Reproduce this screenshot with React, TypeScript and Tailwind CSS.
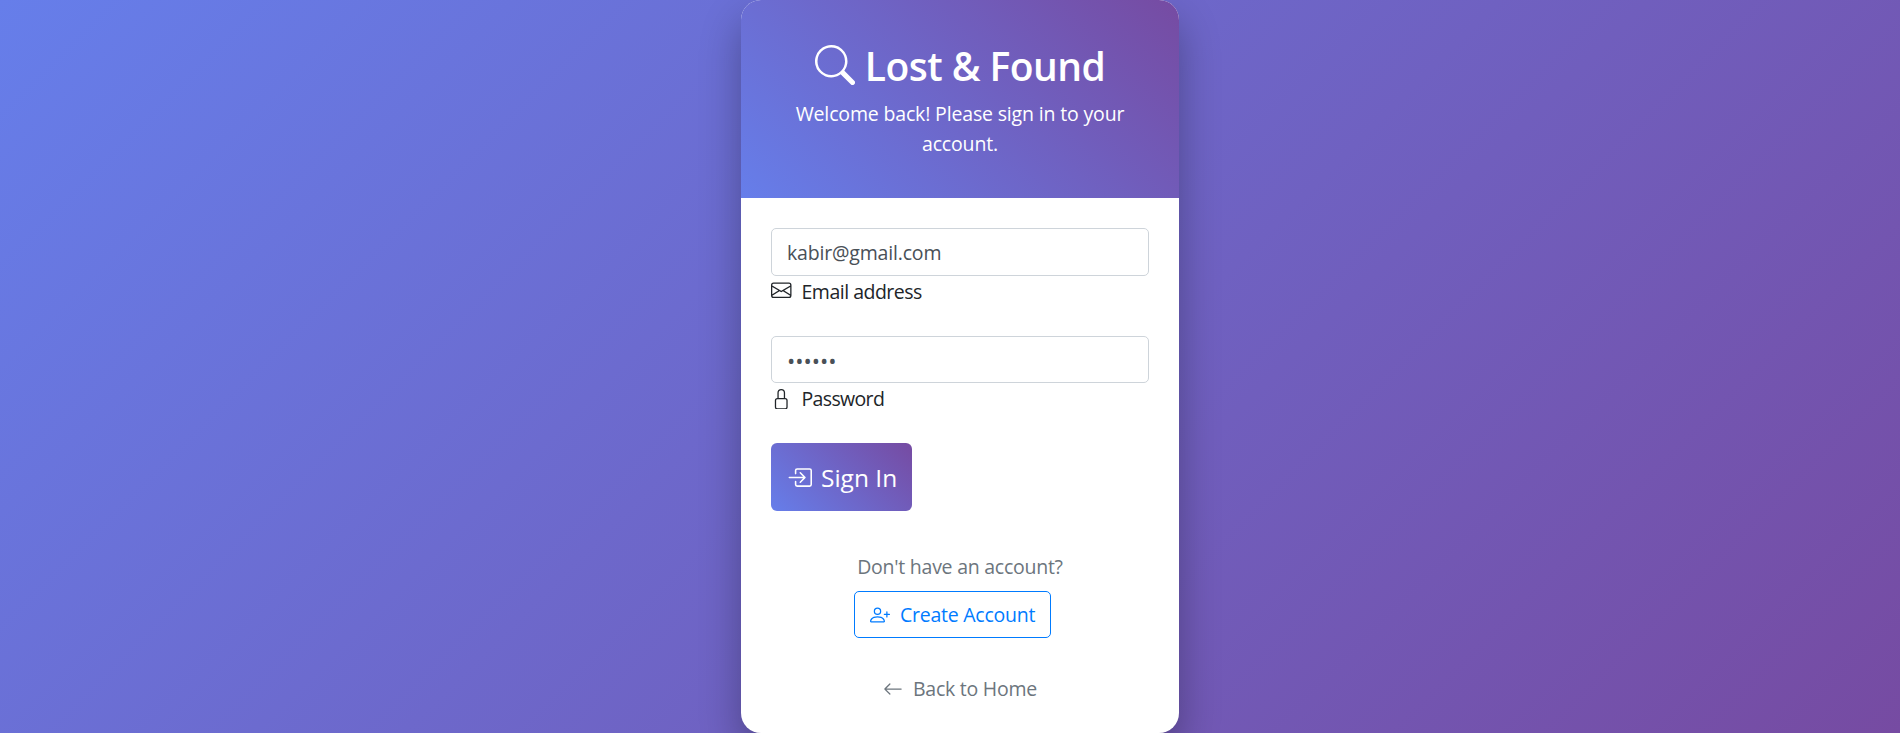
import React from "react";
import {
  BsSearch,
  BsEnvelope,
  BsLock,
  BsBoxArrowInRight,
  BsPersonPlus,
  BsArrowLeft,
} from "react-icons/bs";

type FieldProps = {
  id: string;
  type: string;
  value: string;
  label: string;
  icon: React.ReactNode;
  inputClass: string;
  labelClass: string;
};

function Field({ id, type, value, label, icon, inputClass, labelClass }: FieldProps) {
  return (
    <div className="mb-[30px]">
      <input
        id={id}
        type={type}
        defaultValue={value}
        className={`block h-[47.5px] w-full rounded-[5px] border border-[#ced4da] bg-white px-[15px] text-[#495057] outline-none ${inputClass}`}
      />
      <label htmlFor={id} className="flex h-[30px] items-center gap-[10px] text-[#212529]">
        {icon}
        <span className={`pt-0.5 ${labelClass}`}>{label}</span>
      </label>
    </div>
  );
}

export default function App() {
  return (
    <div className="flex h-[733px] justify-center overflow-hidden bg-[linear-gradient(135deg,#667eea_0%,#764ba2_100%)] pl-5 font-['Open_Sans','Noto_Sans',sans-serif] text-[19.5px] leading-[30px]">
      <main className="h-[733px] w-[438px] overflow-hidden rounded-[20px] bg-white shadow-[0_20px_40px_rgba(0,0,0,0.3)]">
        <header className="h-[198px] bg-[linear-gradient(45deg,#667eea_0%,#764ba2_100%)] px-10 pt-10 text-center text-white">
          <h1 className="flex h-[50px] items-center justify-center gap-[10px] text-[39px] font-semibold leading-[50px]">
            <BsSearch className="size-10" />
            <span className="pt-0.5 tracking-[-0.55px]">Lost &amp; Found</span>
          </h1>
          <p className="-mx-1 mt-[9px] px-1 tracking-[-0.16px]">
            Welcome back! Please sign in to your account.
          </p>
        </header>
        <form className="px-[30px] pt-[30px]">
          <Field
            id="email"
            type="text"
            value="kabir@gmail.com"
            label="Email address"
            inputClass="pt-0.5 tracking-[-0.18px]"
            labelClass="tracking-[-0.5px]"
            icon={<BsEnvelope className="size-[20.5px]" />}
          />
          <Field
            id="password"
            type="password"
            value="kabir1"
            label="Password"
            inputClass="pt-0.5 text-[22px]"
            labelClass="tracking-[-0.65px]"
            icon={<BsLock className="mt-0.5 size-[20.5px]" />}
          />
          <button
            type="button"
            className="flex h-[68px] w-[141px] items-center gap-[9px] rounded-[6px] bg-[linear-gradient(45deg,#667eea_0%,#764ba2_100%)] pl-4 text-[24.5px] text-white"
          >
            <BsBoxArrowInRight className="size-[25px]" />
            <span className="whitespace-nowrap pt-0.5">Sign In</span>
          </button>
        </form>
        <div className="flex flex-col items-center pt-[41px]">
          <p className="tracking-[-0.25px] text-[#6c757d]">Don't have an account?</p>
          <a className="mt-[9px] mr-[15px] flex h-[47px] w-[197px] items-center gap-[10px] rounded-[5px] border border-[#007bff] pl-[15px] text-[#007bff]">
            <BsPersonPlus className="size-5" />
            <span className="whitespace-nowrap pt-px tracking-[-0.25px]">Create Account</span>
          </a>
          <a className="mt-9 flex items-center gap-[10px] text-[#6c757d]">
            <BsArrowLeft className="size-5" />
            <span className="tracking-[-0.25px]">Back to Home</span>
          </a>
        </div>
      </main>
    </div>
  );
}
